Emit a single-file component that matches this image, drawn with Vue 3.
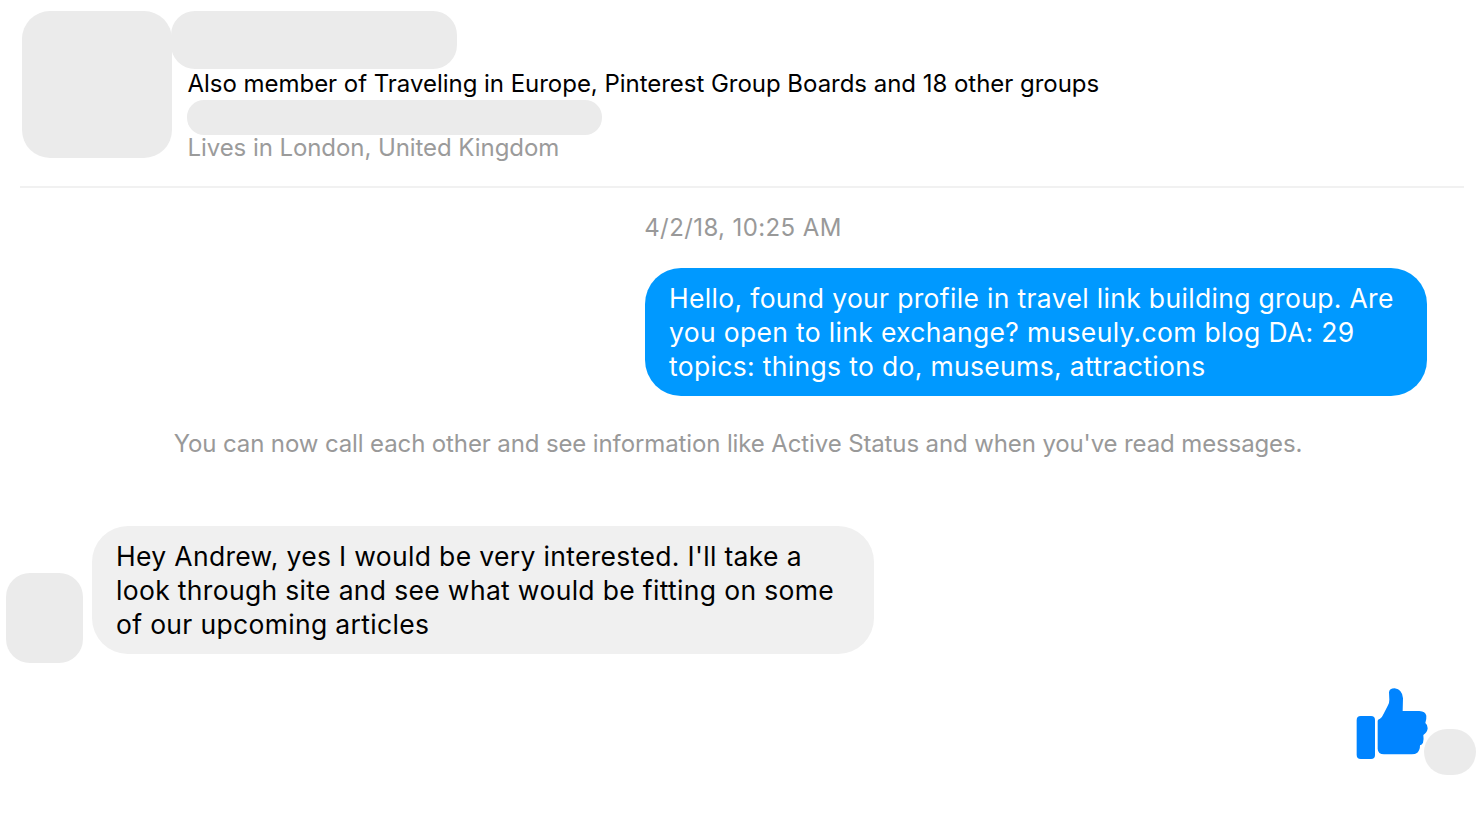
<template>
  <div class="page">
    <header class="profile">
      <div class="avatar"></div>
      <div class="info">
        <div class="name-ph"></div>
        <div class="groups">Also member of Traveling in Europe, Pinterest Group Boards and 18 other groups</div>
        <div class="work-ph"></div>
        <div class="lives">Lives in London, United Kingdom</div>
      </div>
    </header>
    <div class="divider"></div>

    <div class="stamp">4/2/18, 10:25 AM</div>

    <div class="row row-out">
      <div class="bubble out">Hello, found your profile in travel link building group. Are you open to link exchange? museuly.com blog DA: 29 topics: things to do, museums, attractions</div>
    </div>

    <div class="notice">You can now call each other and see information like Active Status and when you've read messages.</div>

    <div class="row row-in">
      <div class="peer"></div>
      <div class="bubble in">Hey Andrew, yes I would be very interested. I'll take a look through site and see what would be fitting on some of our upcoming articles</div>
    </div>

    <div class="like">
      <svg class="thumb" width="73" height="73" viewBox="48 39 219 219">
        <rect x="50" y="123" width="55" height="129" rx="12" fill="#0084ff" />
        <path fill="#0084ff" d="M113 137 Q114 133 120 131 Q127 126 131 116 L144 91 Q148 84 148 74 L147 52 Q148 40 164 40 Q187 43 189 70 L188 108 L238 108 Q256 109 259 122 Q260 132 256 144 Q264 150 263 160 Q262 172 250 180 Q252 195 249 203 Q246 209 240 211 Q240 226 232 233 Q226 238 215 238 L132 238 Q114 238 113 222 Z" />
      </svg>
      <div class="seen"></div>
    </div>
  </div>
</template>

<script setup>
</script>

<style>
html,
body {
  background: #fff;
}
</style>

<style scoped>
.page {
  width: 1482px;
  height: 824px;
  overflow: hidden;
  background: #fff;
  font-family: Inter, "Liberation Sans", sans-serif;
  font-size: 24px;
  color: #000;
  box-sizing: border-box;
  padding-top: 11px;
}

.profile {
  display: flex;
  margin-left: 22px;
  height: 175px;
}

.avatar {
  width: 150px;
  height: 147px;
  border-radius: 28px;
  background: #ebebeb;
  flex-shrink: 0;
}

.info {
  margin-left: -1px;
}

.name-ph {
  width: 286px;
  height: 58px;
  border-radius: 24px;
  background: #ebebeb;
}

.groups {
  margin-left: 16.5px;
  height: 31px;
  line-height: 29px;
  font-size: 24px;
  letter-spacing: -0.03px;
  white-space: nowrap;
}

.work-ph {
  margin-left: 16px;
  width: 415px;
  height: 35px;
  border-radius: 17px;
  background: #ebebeb;
}

.lives {
  margin-left: 16.5px;
  line-height: 25px;
  letter-spacing: -0.07px;
  color: #9b9b9b;
  white-space: nowrap;
}

.divider {
  margin: 0 18px 0 20px;
  height: 2px;
  background: #f1f1f1;
}

.stamp {
  margin-top: 26px;
  padding-left: 4px;
  text-align: center;
  line-height: 28px;
  color: #999;
  letter-spacing: 0.4px;
}

.row {
  display: flex;
}

.row-out {
  justify-content: flex-end;
  margin-top: 26px;
  padding-right: 55px;
}

.bubble {
  box-sizing: border-box;
  padding: 13px 24px;
  height: 128px;
  line-height: 34px;
  font-size: 26.5px;
  letter-spacing: 0.33px;
  border-radius: 36px;
}

.out {
  width: 782px;
  background: #0099ff;
  color: #fff;
}

.notice {
  margin-top: 34px;
  padding-right: 6px;
  text-align: center;
  line-height: 28px;
  color: #999;
  letter-spacing: -0.12px;
  white-space: nowrap;
}

.row-in {
  margin-top: 68px;
  padding-left: 6px;
  align-items: flex-end;
}

.peer {
  width: 77px;
  height: 90px;
  border-radius: 24px;
  background: #ebebeb;
  margin-bottom: -9px;
}

.in {
  margin-left: 9px;
  width: 782px;
  background: #f0f0f0;
  color: #000;
}

.like {
  position: relative;
  margin-top: 34px;
  margin-left: 1356px;
  width: 120px;
  height: 88px;
}

.thumb {
  display: block;
}

.seen {
  position: absolute;
  left: 68px;
  top: 41px;
  width: 52px;
  height: 46px;
  border-radius: 23px;
  background: #ebebeb;
}
</style>
